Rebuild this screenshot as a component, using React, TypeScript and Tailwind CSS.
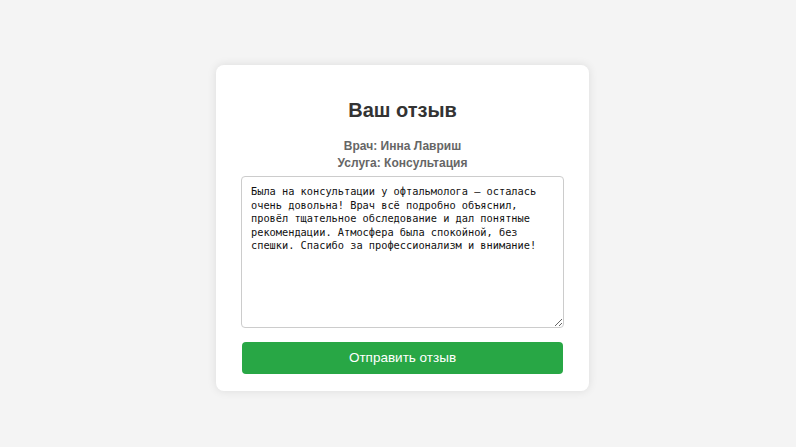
import React from "react";

export default function App() {
  const text =
    "Была на консультации у офтальмолога — осталась очень довольна! Врач всё подробно объяснил, провёл тщательное обследование и дал понятные рекомендации. Атмосфера была спокойной, без спешки. Спасибо за профессионализм и внимание!";
  return (
    <div
      className="min-h-[447px] w-full bg-[#f4f4f4] pt-[65px] pl-[216px]"
      style={{ fontFamily: '"Liberation Sans", Arial, sans-serif' }}
    >
      <div className="flex w-[373px] flex-col rounded-[8px] bg-white px-[25px] pt-[34px] pb-[17px] shadow-[0_0_10px_rgba(0,0,0,0.1)]">
        <h2 className="text-center text-[20px] font-bold leading-[23px] text-[#333]">
          Ваш отзыв
        </h2>
        <div className="mt-[16px] text-center text-[12px] font-bold leading-[17px] text-[#666]">
          <p>Врач: Инна Лавриш</p>
          <p>Услуга: Консультация</p>
        </div>
        <textarea
          readOnly
          defaultValue={text}
          className="mt-[4px] h-[152px] w-[323px] resize-y rounded-[4px] border border-[#ccc] px-[9px] py-[8px] text-[10.3px] leading-[13.5px] text-[#111] outline-none"
          style={{ fontFamily: '"DejaVu Sans Mono", monospace' }}
        />
        <button className="mt-[14px] ml-[1px] h-[32px] w-[321px] rounded-[4px] bg-[#28a745] text-[13.5px] text-white">
          Отправить отзыв
        </button>
      </div>
    </div>
  );
}
